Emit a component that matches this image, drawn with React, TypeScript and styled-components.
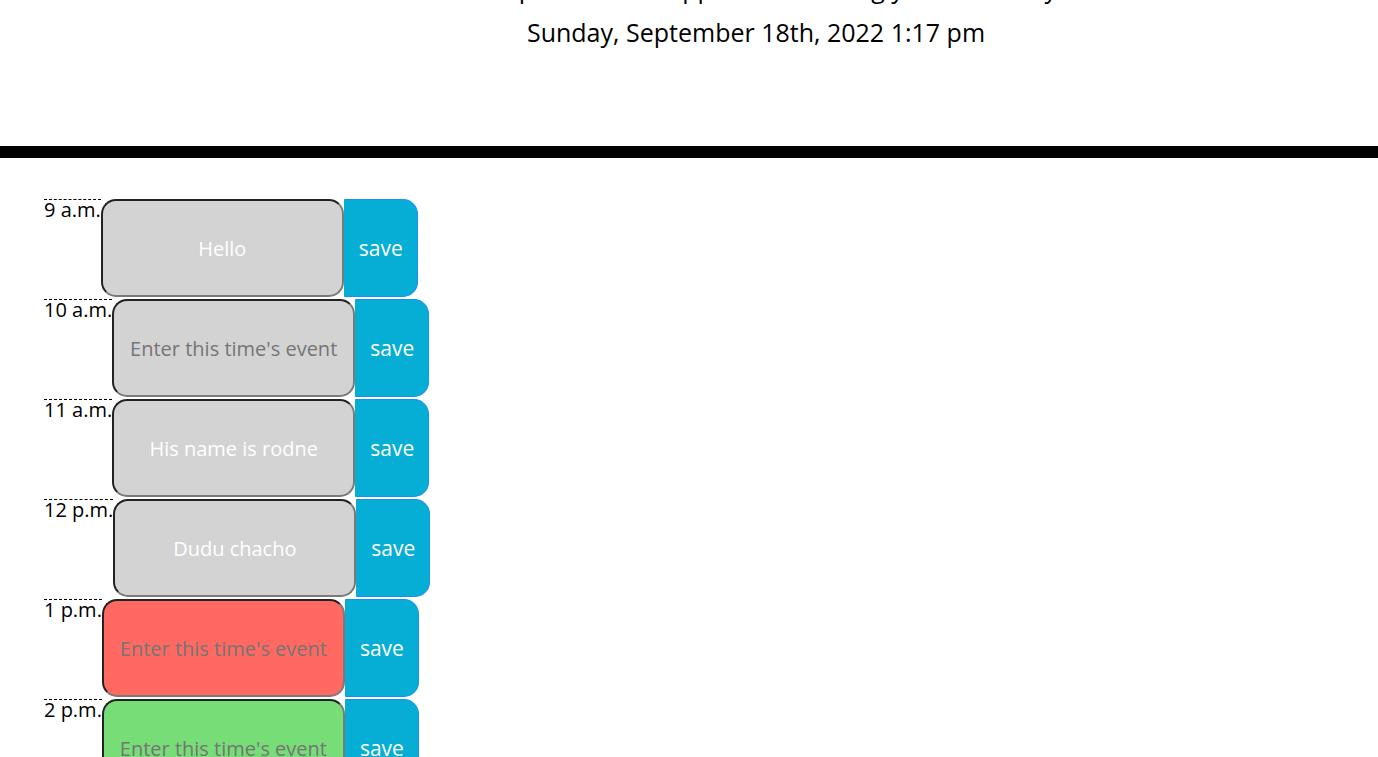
import React from 'react';
import styled, { createGlobalStyle } from 'styled-components';

const GlobalStyle = createGlobalStyle`
	html, body {
		margin: 0;
		padding: 0;
		background: #ffffff;
	}
	body {
		font-family: 'Open Sans', 'Noto Sans', sans-serif;
		color: #000000;
	}
`;

type Status = 'past' | 'present' | 'future';

const blocks: { hour: string; text: string; status: Status }[] = [
	{ hour: '9 a.m.', text: 'Hello', status: 'past' },
	{ hour: '10 a.m.', text: '', status: 'past' },
	{ hour: '11 a.m.', text: 'His name is rodne', status: 'past' },
	{ hour: '12 p.m.', text: 'Dudu chacho', status: 'past' },
	{ hour: '1 p.m.', text: '', status: 'present' },
	{ hour: '2 p.m.', text: '', status: 'future' },
	{ hour: '3 p.m.', text: '', status: 'future' },
	{ hour: '4 p.m.', text: '', status: 'future' },
	{ hour: '5 p.m.', text: '', status: 'future' },
];

const statusColors: Record<Status, string> = {
	past: '#d3d3d3',
	present: '#ff6961',
	future: '#77dd77',
};

const App = () => {
	return (
		<>
			<GlobalStyle />
			<Jumbotron>
				<Lead>A simple calendar app for scheduling your work day</Lead>
				<Lead>Sunday, September 18th, 2022 1:17 pm</Lead>
			</Jumbotron>
			<Schedule>
				{blocks.map((b) => (
					<TimeRow key={b.hour}>
						<Hour>{b.hour}</Hour>
						<Description
							status={b.status}
							defaultValue={b.text}
							placeholder="Enter this time's event"
						/>
						<SaveBtn>save</SaveBtn>
					</TimeRow>
				))}
			</Schedule>
		</>
	);
};

export default App;

const Jumbotron = styled.header`
	margin-top: -30px;
	padding: 0 0 96px 134px;
	text-align: center;
	border-bottom: 12px solid #000000;
`;

const Lead = styled.p`
	margin: 0 0 8px;
	font-size: 25px;
	line-height: 36px;
	font-weight: 400;
	&:last-child {
		margin-bottom: 0;
	}
`;

const Schedule = styled.main`
	padding: 41px 0 40px 44px;
`;

const TimeRow = styled.div`
	display: flex;
	align-items: flex-start;
	height: 100px;
`;

const Hour = styled.div`
	flex: none;
	border-top: 1px dashed #000000;
	font-size: 20px;
	line-height: 20px;
	color: #000000;
	white-space: nowrap;
`;

const Description = styled.textarea<{ status: Status }>`
	box-sizing: border-box;
	flex: none;
	width: 243px;
	height: 98px;
	margin: 0;
	padding: 34px 8px 0;
	resize: none;
	border-width: 2px;
	border-style: solid;
	border-color: #222222 #7a7a7a #7a7a7a #222222;
	border-radius: 15px;
	background: ${({ status }) => statusColors[status]};
	color: #ffffff;
	font-family: 'Open Sans', 'Noto Sans', sans-serif;
	font-size: 20px;
	line-height: 27px;
	text-align: center;
	overflow: hidden;
	outline: none;
	&::placeholder {
		color: #757575;
		opacity: 1;
	}
`;

const SaveBtn = styled.button`
	box-sizing: border-box;
	flex: none;
	width: 74px;
	height: 98px;
	margin: 0;
	padding: 0;
	background: #06aed5;
	border: 1px solid #1a8cff;
	border-left-color: #06aed5;
	border-radius: 0 15px 15px 0;
	color: #ffffff;
	font-family: 'Open Sans', 'Noto Sans', sans-serif;
	font-size: 21px;
	line-height: 27px;
	cursor: pointer;
`;
